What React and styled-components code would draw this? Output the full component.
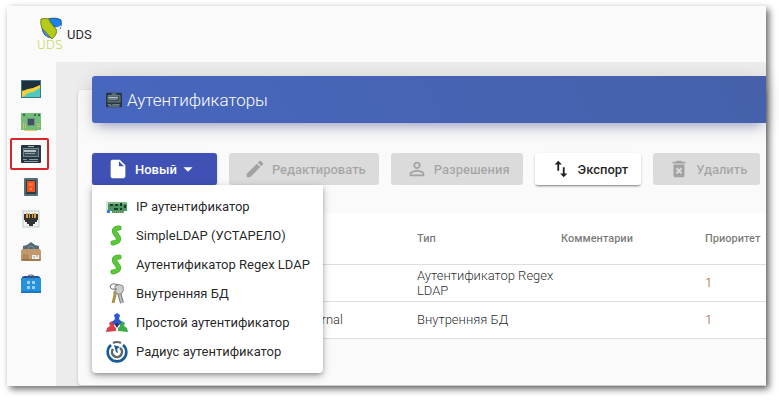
import React from 'react';
import styled, {createGlobalStyle, css} from 'styled-components';
import {
    MdInsertDriveFile,
    MdArrowDropDown,
    MdEdit,
    MdPersonOutline,
    MdImportExport,
    MdDeleteForever
} from 'react-icons/md';

const providers = [
    {icon: <CardIcon/>, text: 'IP аутентификатор'},
    {icon: <SnakeIcon/>, text: 'SimpleLDAP (УСТАРЕЛО)'},
    {icon: <SnakeIcon/>, text: 'Аутентификатор Regex LDAP'},
    {icon: <KeysIcon/>, text: 'Внутренняя БД'},
    {icon: <PeopleIcon/>, text: 'Простой аутентификатор'},
    {icon: <RadiusIcon/>, text: 'Радиус аутентификатор'}
];

const rows = [
    {icon: <SnakeIcon/>, name: 'AD', type: 'Аутентификатор Regex LDAP', comments: '', priority: 1},
    {icon: <KeysIcon/>, name: 'Internal', type: 'Внутренняя БД', comments: '', priority: 1}
];

const sections = [
    {label: 'Сводка', icon: <ChartIcon/>},
    {label: 'Поставщики', icon: <ChipIcon/>},
    {label: 'Аутентификаторы', icon: <TerminalIcon/>, active: true},
    {label: 'Менеджеры ОС', icon: <SwitchIcon/>},
    {label: 'Транспорты', icon: <PortIcon/>},
    {label: 'Пулы', icon: <BoxIcon/>},
    {label: 'Инструменты', icon: <BagIcon/>}
];

export default function App() {
    return (
        <>
        <GlobalStyle/>
        <Frame>
            <Header>
                <Brand href='#'>
                    <Logo/>
                    <span>UDS</span>
                </Brand>
            </Header>

            <Body>
                <Sidebar>
                    {sections.map(s => (
                        <SideLink href='#' key={s.label} aria-label={s.label} $active={s.active}>
                            {s.icon}
                        </SideLink>
                    ))}
                </Sidebar>

                <Main>
                    <Card>
                        <Banner>
                            <TerminalIcon/>
                            <h1>Аутентификаторы</h1>
                        </Banner>

                        <Toolbar>
                            <NewWrapper>
                                <Button $primary aria-haspopup='menu' aria-expanded='true'>
                                    <MdInsertDriveFile/>
                                    <ButtonText>Новый<MdArrowDropDown/></ButtonText>
                                </Button>
                                <Menu role='menu'>
                                    {providers.map(p => (
                                        <MenuItem role='menuitem' key={p.text}>
                                            {p.icon}
                                            {p.text}
                                        </MenuItem>
                                    ))}
                                </Menu>
                            </NewWrapper>
                            <Button disabled><MdEdit/>Редактировать</Button>
                            <Button disabled><MdPersonOutline/>Разрешения</Button>
                            <Button><MdImportExport/>Экспорт</Button>
                            <Button disabled><MdDeleteForever/>Удалить</Button>
                        </Toolbar>

                        <Table>
                            <colgroup>
                                <col className='select'/>
                                <col className='data'/>
                                <col className='data'/>
                                <col className='data'/>
                                <col/>
                            </colgroup>
                            <thead>
                                <tr>
                                    <th></th>
                                    <th aria-label='Имя'></th>
                                    <th>Тип</th>
                                    <th>Комментарии</th>
                                    <th>Приоритет</th>
                                </tr>
                            </thead>
                            <tbody>
                                {rows.map(r => (
                                    <tr key={r.name}>
                                        <td></td>
                                        <td><Name>{r.icon}{r.name}</Name></td>
                                        <td>{r.type}</td>
                                        <td>{r.comments}</td>
                                        <Priority>{r.priority}</Priority>
                                    </tr>
                                ))}
                            </tbody>
                        </Table>
                    </Card>
                </Main>
            </Body>
        </Frame>
        </>
    )
}

function Logo() {
    return (
        <svg width='28' height='36' viewBox='0 0 28 36' aria-hidden='true'>
            <path d='M11 3Q19 1 24 4Q25 9 23 13L18 11Z' fill='#1c83ee' stroke='#1c4f78'/>
            <path d='M5 12L15 22Q6 21 5 12Z' fill='#4a90e8' stroke='#24588d'/>
            <path d='M17 11Q21 12 24 9Q24 14 19 17Z' fill='#e6eef5'/>
            <path d='M4 3Q8 2 12 3Q12 6 19 13Q21 18 15 23L5 12Q3 8 4 3Z' fill='#b5cb18' stroke='#71861b'/>
            <text x='0' y='33' fontSize='12' fontFamily='DejaVu Sans, sans-serif' fontWeight='200' fill='#b8cc1e'>UDS</text>
        </svg>
    )
}

function ChartIcon() {
    return (
        <svg width='20' height='20' viewBox='0 0 20 20' aria-hidden='true'>
            <rect y='1' width='20' height='18' fill='#3f7687'/>
            <rect x='1' y='2' width='18' height='16' fill='#20303b'/>
            <path d='M1 12L7 10L12 9L19 6V11L8 17L1 18Z' fill='#f5d03c'/>
            <path d='M2 18L7 14L12 13L19 9V18Z' fill='#4ccbbe'/>
        </svg>
    )
}

function ChipIcon() {
    return (
        <svg width='20' height='20' viewBox='0 0 20 20' aria-hidden='true'>
            <path d='M0 1H20V18H16V19H4V18H0Z' fill='#73bd76'/>
            <path d='M3 18H15V19H3Z' fill='#f0cf62'/>
            <path d='M2 2H4V4H2ZM13 2H15V4H13ZM17 2H19V4H17Z' fill='#3d6257'/>
            <rect x='6' y='6' width='8' height='8' fill='#6e8f86'/>
            <rect x='7' y='7' width='6' height='6' fill='#42515f'/>
            <path d='M2 11H3V17H2ZM4 12H5V16H4ZM16 12H19V13H16ZM16 14H19V15H16Z' fill='#d4b96e'/>
        </svg>
    )
}

function TerminalIcon() {
    return (
        <svg width='20' height='20' viewBox='0 0 20 20' aria-hidden='true'>
            <rect y='1' width='20' height='18' rx='1' fill='#263640'/>
            <path d='M7 2H13V3H7Z' fill='#a9b8bf'/>
            <path d='M2 4H18V13H2Z' fill='#74868f'/>
            <path d='M3 5H17V12H3Z' fill='#3b4d58'/>
            <path d='M3 6H15V8H3Z' fill='#b4c2c8'/>
            <path d='M4 9H14V10H4ZM2 15H6V16H2ZM8 15H17V16H8ZM3 17H17V18H3Z' fill='#899ba4'/>
        </svg>
    )
}

function SwitchIcon() {
    return (
        <svg width='20' height='20' viewBox='0 0 20 20' aria-hidden='true'>
            <rect x='3' y='1' width='14' height='18' rx='1' fill='#566e79'/>
            <rect x='5' y='3' width='10' height='14' fill='#293b43'/>
            <rect x='6' y='4' width='8' height='11' fill='#f4511e'/>
            <path d='M8 6H12V9H8Z' fill='#ff713b'/>
            <path d='M9 11H11V13H9Z' fill='#ff8a58'/>
        </svg>
    )
}

function PortIcon() {
    return (
        <svg width='20' height='20' viewBox='0 0 20 20' aria-hidden='true'>
            <rect x='2' y='2' width='16' height='16' fill='#eef2f4' stroke='#bdc8cd'/>
            <path d='M3 5H17V11H16V13H14V15H12V17H8V15H6V13H4V11H3Z' fill='#303234'/>
            <path d='M5 4H7V9H5ZM8 4H9V9H8ZM11 4H12V9H11ZM13 4H15V9H13Z' fill='#e0a335'/>
        </svg>
    )
}

function BoxIcon() {
    return (
        <svg width='20' height='20' viewBox='0 0 20 20' aria-hidden='true'>
            <path d='M2 9V4L6 3L10 0L14 3L18 4V9Z' fill='#526a76'/>
            <circle cx='10' cy='7' r='3' fill='none' stroke='#7c9099'/>
            <path d='M1 7H19L20 9V18L19 19H1L0 18V9Z' fill='#c3986a'/>
            <path d='M0 17H20V18L19 19H1L0 18Z' fill='#a27a50'/>
            <path d='M3 12V16M6 12V16M2 17H8' stroke='#956e49'/>
            <rect x='11' y='13' width='7' height='4' fill='#f4f0e8'/>
            <path d='M12 15H14M15 14H17' stroke='#87939a'/>
        </svg>
    )
}

function BagIcon() {
    return (
        <svg width='20' height='20' viewBox='0 0 20 20' aria-hidden='true'>
            <path d='M1 3L3 2H17L19 3V8H1Z' fill='#24509b'/>
            <path d='M0 4H20V19H0Z' fill='#2792dc'/>
            <path d='M0 17H20V19H0Z' fill='#1976c5'/>
            <path d='M7 5V2Q7 1 10 1T13 2V5' fill='none' stroke='#525d6b'/>
            <path d='M6 7H9V10H6ZM11 7H14V10H11ZM6 12H9V15H6ZM11 12H14V15H11Z' fill='#9fd0f3'/>
        </svg>
    )
}

function CardIcon() {
    return (
        <svg width='22' height='22' viewBox='0 0 22 22' aria-hidden='true'>
            <path d='M1 5V17' stroke='#b8c2c4'/>
            <path d='M2 6H21V15H18V17H6V15H2Z' fill='#4c9463'/>
            <path d='M2 6H21V8H2Z' fill='#83b886'/>
            <path d='M4 8H7V10H4ZM9 8H12V10H9ZM14 7H16V10H14ZM18 9H20V12H18ZM8 12H12V14H8ZM14 12H16V14H14Z' fill='#173e28'/>
            <path d='M7 16H18' stroke='#c8bd5e' strokeDasharray='1 1'/>
            <rect x='1' y='14' width='3' height='3' fill='#2b85e1'/>
        </svg>
    )
}

function SnakeIcon() {
    return (
        <svg width='22' height='22' viewBox='0 0 22 22' aria-hidden='true'>
            <path d='M13 3Q7 3 9 8L12 12Q14 17 7 18' fill='none' stroke='#3a9c25' strokeWidth='5' strokeLinecap='round'/>
            <path d='M13 3Q7 3 9 8L12 12Q14 17 7 18' fill='none' stroke='#5ac936' strokeWidth='4' strokeLinecap='round'/>
        </svg>
    )
}

function KeysIcon() {
    return (
        <svg width='22' height='22' viewBox='0 0 22 22' aria-hidden='true'>
            <path d='M9 8L9 12L7 20' fill='none' stroke='#ad9145' strokeWidth='3'/>
            <path d='M13 9L14 13L16 20' fill='none' stroke='#777' strokeWidth='4'/>
            <path d='M13 9L14 13L16 20' fill='none' stroke='#bcbcbc' strokeWidth='2'/>
            <path d='M9 3Q13 0 17 3Q19 8 15 11H11Q8 8 9 3Z' fill='#cdcdcd' stroke='#8c8c8c'/>
            <path d='M12 2Q5-1 4 4Q5 7 11 6' fill='none' stroke='#6b6b68'/>
        </svg>
    )
}

function PeopleIcon() {
    return (
        <svg width='22' height='22' viewBox='0 0 22 22' aria-hidden='true'>
            <path d='M0 20L1 16L4 14L3 11L6 9L9 11L8 14L10 16V19Z' fill='#d3414d'/>
            <path d='M12 19V16L14 14L13 11L16 9L19 11L18 14L21 16L22 20Z' fill='#3fab48'/>
            <path d='M8 3L11 1L14 3L13 7L16 10L13 13L11 15L9 13L6 10L9 7Z' fill='#2b58cc'/>
            <path d='M9 12L11 11L13 12L11 16Z' fill='#252c66'/>
        </svg>
    )
}

function RadiusIcon() {
    return (
        <svg width='22' height='22' viewBox='0 0 22 22' aria-hidden='true'>
            <path d='M5 4A9.3 9.3 0 1 0 17 4' fill='none' stroke='#145a9c' strokeWidth='2.6'/>
            <path d='M7 2Q11 0 15 2' fill='none' stroke='#666' strokeWidth='2'/>
            <path d='M14 7A5 5 0 1 1 7 8' fill='none' stroke='#62676b' strokeWidth='2.6'/>
            <path d='M8 4L14 6L11 8L12 12L10 11Z' fill='#145a9c'/>
        </svg>
    )
}

const GlobalStyle = createGlobalStyle`
    * {
        box-sizing: border-box;
    }
    body {
        margin: 0;
        background: white;
        font-family: Roboto, sans-serif;
        font-size: 13px;
        color: rgba(0, 0, 0, .87);
    }
    svg {
        flex: none;
        display: block;
    }
    button {
        font-family: inherit;
    }
`;

const Frame = styled.div`
    display: flex;
    flex-direction: column;
    min-height: calc(100vh - 20px);
    margin: 6px 13px 14px 7px;
    background: #fafafa;
    box-shadow: 3px 3px 7px rgba(0, 0, 0, .6);
`;

const Header = styled.header`
    display: flex;
    align-items: center;
    height: 56px;
    padding: 0 30px;
`;

const Brand = styled.a`
    display: flex;
    align-items: center;
    gap: 2px;
    color: inherit;
    text-decoration: none;
`;

const Body = styled.div`
    display: flex;
    flex: 1;
`;

const Sidebar = styled.nav`
    display: flex;
    flex: none;
    flex-direction: column;
    justify-content: space-between;
    width: 49px;
    height: 227px;
    margin-top: 11px;
    padding-left: 3px;
`;

const SideLink = styled.a`
    display: flex;
    align-items: center;
    width: 39px;
    height: 32px;
    padding-left: 9px;
    border: 2px solid ${props => props.$active ? '#d9252a' : 'transparent'};
    border-radius: 2px;
`;

const Main = styled.main`
    display: flex;
    flex: 1;
    min-width: 0;
    padding: 28px 0 1px 22px;
    background: #ececec;
`;

const Card = styled.section`
    flex: 1;
    min-width: 0;
    padding-left: 14px;
    background: #fafafa;
    border-radius: 4px 0 0 4px;
    box-shadow: 0 1px 3px rgba(0, 0, 0, .2);
`;

const Banner = styled.div`
    display: flex;
    align-items: center;
    gap: 5px;
    height: 47px;
    margin-top: -14px;
    padding: 0 14px;
    color: white;
    background: linear-gradient(60deg, #4766be, #4661aa);
    border-radius: 3px 0 0 3px;
    box-shadow: 0 4px 20px rgba(0, 0, 0, .14), 0 7px 10px -5px rgba(63, 81, 181, .4);

    h1 {
        margin: 0;
        font-size: 17px;
        font-weight: 300;
    }
    svg {
        width: 16px;
        height: 16px;
    }
`;

const Toolbar = styled.div`
    display: flex;
    gap: 12px;
    margin: 30px 0 28px;
`;

const NewWrapper = styled.div`
    position: relative;
`;

const Button = styled.button`
    display: flex;
    align-items: center;
    gap: 6px;
    height: 32px;
    padding: 0 13px 0 15px;
    border: none;
    border-radius: 3px;
    color: rgba(0, 0, 0, .87);
    background: white;
    font-size: 13px;
    font-weight: 500;
    white-space: nowrap;
    box-shadow: 0 2px 2px -1px rgba(0, 0, 0, .4), 0 1px 3px rgba(0, 0, 0, .15);
    cursor: pointer;

    svg {
        width: 22px;
        height: 22px;
    }
    &:disabled {
        color: rgba(0, 0, 0, .26);
        background: rgba(0, 0, 0, .12);
        box-shadow: none;
        cursor: default;
    }
    ${props => props.$primary && css`
        padding-right: 18px;
        color: white;
        background: #3f51b5;
    `}
`;

const ButtonText = styled.span`
    display: flex;
    align-items: center;
`;

const Menu = styled.div`
    position: absolute;
    top: 100%;
    left: 0;
    z-index: 1;
    padding: 7px 0;
    background: white;
    border-radius: 0 0 4px 4px;
    box-shadow: 0 2px 4px -1px rgba(0, 0, 0, .3), 0 3px 8px rgba(0, 0, 0, .25);
`;

const MenuItem = styled.button`
    display: flex;
    align-items: center;
    gap: 8px;
    width: 100%;
    height: 29px;
    padding: 0 13px 0 14px;
    border: none;
    color: rgba(0, 0, 0, .87);
    background: none;
    font-size: 13px;
    white-space: nowrap;
    cursor: pointer;

    &:hover {
        background: rgba(0, 0, 0, .04);
    }
`;

const Table = styled.table`
    width: 100%;
    table-layout: fixed;
    border-collapse: collapse;
    background: white;

    .select {
        width: 181px;
    }
    .data {
        width: 144px;
    }
    th, td {
        padding: 0;
        border-bottom: 1px solid #dedede;
        text-align: left;
    }
    th {
        height: 51px;
        color: rgba(0, 0, 0, .54);
        font-size: 11px;
        font-weight: 500;
    }
    td {
        height: 37px;
        font-weight: 300;
        line-height: 15px;
    }
`;

const Name = styled.span`
    display: flex;
    align-items: center;
    gap: 5px;
`;

const Priority = styled.td`
    color: #a04a1c;
`;
